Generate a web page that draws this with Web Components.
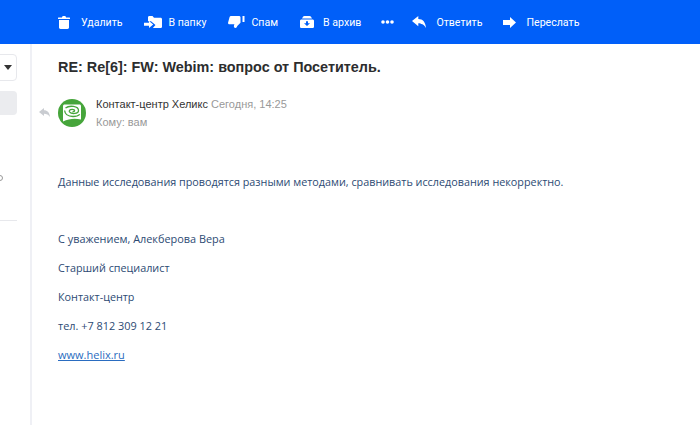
<!DOCTYPE html>
<html lang="ru">
<head>
<meta charset="utf-8">
<title>Письмо</title>
<style>
    html, body { margin: 0; height: 100%; background: #fff; overflow: hidden; }
    body { font-family: "Liberation Sans", Arial, sans-serif; }
    mail-body a { color: #2a6cc0; font-size: 11px; }
</style>
</head>
<body>

<template id="tool-button-tmpl">
    <style>
        :host {
            display: flex;
            align-items: center;
            gap: var(--icon-gap, 8px);
            margin-right: var(--after, 22px);
            color: #fff;
            font: 10.6px Roboto, sans-serif;
            white-space: nowrap;
        }
        ::slotted(svg) { display: block; fill: #fff; }
    </style>
    <slot name="icon"></slot>
    <slot></slot>
</template>

<template id="mail-toolbar-tmpl">
    <style>
        :host {
            display: flex;
            align-items: center;
            height: 44px;
            padding-left: 58px;
            background: #005ff9;
        }
    </style>
    <slot></slot>
</template>

<template id="mail-sidebar-tmpl">
    <style>
        :host {
            display: block;
            flex: none;
            width: 30px;
            height: 381px;
            border-right: 2px solid #eff0f5;
            overflow: hidden;
        }
        .select {
            box-sizing: border-box;
            width: 30px;
            height: 27px;
            margin: 10px 0 0 -13px;
            border: 1px solid #e7e8ec;
            border-radius: 4px;
            display: flex;
            align-items: center;
            justify-content: flex-end;
            padding-right: 4px;
        }
        .arrow {
            width: 0;
            height: 0;
            border: 4px solid transparent;
            border-top: 5px solid #333;
            border-bottom: 0;
        }
        .active {
            width: 30px;
            height: 24px;
            margin: 10px 0 0 -13px;
            border-radius: 4px;
            background: #ebecef;
        }
        .dot {
            box-sizing: border-box;
            width: 6px;
            height: 6px;
            margin: 60px 0 0 -3px;
            border: 1px solid #999;
            border-radius: 50%;
        }
        hr {
            width: 17px;
            height: 1px;
            margin: 39px 0 0;
            border: 0;
            background: #e7e8ec;
        }
    </style>
    <div class="select"><span class="arrow"></span></div>
    <div class="active"></div>
    <div class="dot"></div>
    <hr>
</template>

<template id="mail-header-tmpl">
    <style>
        :host {
            display: flex;
            align-items: flex-start;
            margin-top: 23px;
            margin-left: -19px;
            font: 11px Arial, "Liberation Sans", sans-serif;
        }
        .back { flex: none; width: 11px; height: 9px; margin: 9px 8px 0 0; fill: #c9ccd1; }
        .avatar { flex: none; width: 28px; height: 28px; margin-right: 10px; }
        .who { line-height: 18px; margin-top: -4px; }
        .name { color: #333; }
        .date, .to { color: #999; }
    </style>
    <svg class="back" viewBox="0 0 11 9"><path d="M0 4 L5 0 V2.3 C8.5 2.3 10.5 4.5 11 9 C9.5 6.6 7.6 5.7 5 5.7 V8 Z"/></svg>
    <svg class="avatar" viewBox="0 0 28 28">
        <circle cx="14" cy="14" r="14" fill="#46a53b"/>
        <path d="M5 7 C5 6 5.7 5.4 6.6 5.4 H21.4 C22.4 5.4 23 6 23 7 V20.5 C17 19 11 19.6 5 22.4 Z" fill="#fff"/>
        <path d="M7.5 9 C11.5 6 20.5 7 20.5 11.5 C20.5 15 13.5 15.5 11.5 12.8 C10.4 11 14 9.6 16.2 10.9 C17.2 11.7 16.2 13 14.4 12.8" fill="none" stroke="#46a53b" stroke-width="1.3"/>
        <path d="M6.6 11.5 C7 15.6 10.6 17.4 15 17.5 C17.6 17.5 20.2 17 21.8 15.4" fill="none" stroke="#46a53b" stroke-width="1.3"/>
    </svg>
    <div class="who">
        <div><span class="name"><slot name="from"></slot></span> <span class="date"><slot name="date"></slot></span></div>
        <div class="to"><slot name="to"></slot></div>
    </div>
</template>

<template id="mail-body-tmpl">
    <style>
        :host {
            display: block;
            margin-top: 43px;
            color: #2c4a73;
            font: 10.8px/15px "Open Sans", sans-serif;
        }
        ::slotted(p) { margin: 0 0 14px; }
        ::slotted(p.lead) { margin-bottom: 42px; }
        ::slotted(p.wide) { font-size: 10.9px; }
    </style>
    <slot></slot>
</template>

<template id="mail-view-tmpl">
    <style>
        :host { display: block; flex: 1; padding-left: 26px; }
        h1 {
            margin: 15px 0 0;
            color: #2c2d2e;
            font: bold 14.4px/17px Arial, "Liberation Sans", sans-serif;
        }
    </style>
    <h1><slot name="subject"></slot></h1>
    <slot></slot>
</template>

<template id="mail-app-tmpl">
    <style>
        :host { display: block; }
        .row { display: flex; }
    </style>
    <slot name="toolbar"></slot>
    <div class="row">
        <mail-sidebar></mail-sidebar>
        <slot></slot>
    </div>
</template>

<mail-app>
    <mail-toolbar slot="toolbar">
        <tool-button style="--icon-gap:11px">
            <svg slot="icon" width="12" height="13" viewBox="0 0 12 14" preserveAspectRatio="none"><path d="M4 1.5 C4 .6 4.6 0 5.5 0 H6.5 C7.4 0 8 .6 8 1.5 H11.5 C11.8 1.5 12 1.7 12 2 V3.2 H0 V2 C0 1.7 .2 1.5 .5 1.5 Z M1 4.3 H11 V12.5 C11 13.4 10.4 14 9.5 14 H2.5 C1.6 14 1 13.4 1 12.5 Z"/></svg>
            Удалить
        </tool-button>
        <tool-button style="--icon-gap:6px">
            <svg slot="icon" width="18" height="12" viewBox="0 0 18 14" preserveAspectRatio="none"><path d="M4 1.5 C4 .7 4.6 0 5.4 0 H8.5 L10 2 H16.5 C17.3 2 18 2.7 18 3.5 V12.5 C18 13.3 17.3 14 16.5 14 H8.8 L11.5 10.5 7 6 H4 Z M0 8 H5 V5.8 L9.2 10 5 14 V11.4 H0 Z"/></svg>
            В папку
        </tool-button>
        <tool-button style="--icon-gap:5px">
            <svg slot="icon" width="18" height="12" viewBox="0 0 18 14" preserveAspectRatio="none"><path d="M3 0 H11 C11.8 0 12.5 .7 12.5 1.5 V8 L9.5 11.5 C9 12.2 8.8 14 7.5 14 C6.2 14 5.6 12.6 6 11 L6.4 9.5 H1.6 C.5 9.5 -.2 8.6 .1 7.6 L1.6 1.2 C1.8 .5 2.3 0 3 0 Z M14.5 0 H16.5 V7 H14.5 Z"/></svg>
            Спам
        </tool-button>
        <tool-button style="--icon-gap:9px;--after:20px">
            <svg slot="icon" width="14" height="12" viewBox="0 0 14 14" preserveAspectRatio="none"><path fill-rule="evenodd" d="M3 1 C3.3 .4 3.8 0 4.5 0 H9.5 C10.2 0 10.7 .4 11 1 L12 3 H2 Z M1.5 4 H12.5 C13.3 4 14 4.7 14 5.5 V12.5 C14 13.3 13.3 14 12.5 14 H1.5 C.7 14 0 13.3 0 12.5 V5.5 C0 4.7 .7 4 1.5 4 Z M6 6 V8.5 H4 L7 11.8 10 8.5 H8 V6 Z"/></svg>
            В архив
        </tool-button>
        <tool-button style="--icon-gap:0;--after:18px">
            <svg slot="icon" width="13" height="4" viewBox="0 0 13 4"><circle cx="2" cy="2" r="1.8"/><circle cx="6.5" cy="2" r="1.8"/><circle cx="11" cy="2" r="1.8"/></svg>
        </tool-button>
        <tool-button style="--icon-gap:10px;--after:21px">
            <svg slot="icon" width="14" height="12" viewBox="0 0 14 12"><path d="M0 5 L6.3 0 V3 C11 3 13.5 6.3 14 12 C12.4 9.4 10.6 7.8 9 8 L8.6 7.6 C7.8 7.3 7 7.2 6.3 7.2 V10.2 Z"/></svg>
            Ответить
        </tool-button>
        <tool-button style="--icon-gap:10px">
            <svg slot="icon" width="13" height="11" viewBox="0 0 13 12" preserveAspectRatio="none"><path d="M13 6 L7 0 V3.4 H0 V8.6 H7 V12 Z"/></svg>
            Переслать
        </tool-button>
    </mail-toolbar>

    <mail-view>
        <span slot="subject">RE: Re[6]: FW: Webim: вопрос от Посетитель.</span>
        <mail-header>
            <span slot="from">Контакт-центр Хеликс</span>
            <span slot="date">Сегодня, 14:25</span>
            <span slot="to">Кому: вам</span>
        </mail-header>
        <mail-body>
            <p class="lead">Данные исследования проводятся разными методами, сравнивать исследования некорректно.</p>
            <p class="wide">С уважением, Алекберова Вера</p>
            <p>Старший специалист</p>
            <p>Контакт-центр</p>
            <p class="wide">тел. +7 812 309 12 21</p>
            <p><a href="#">www.helix.ru</a></p>
        </mail-body>
    </mail-view>
</mail-app>

<script>
    "use strict";

    // テンプレートをShadowツリーへコピーするだけの共通クラス
    function define(name) {
        customElements.define(name, class extends HTMLElement {
            connectedCallback() {
                if (this.shadowRoot) return;
                const tmpl = document.getElementById(name + "-tmpl");
                this.attachShadow({mode: "open"}).append(tmpl.content.cloneNode(true));
            }
        });
    }

    ["tool-button", "mail-toolbar", "mail-sidebar", "mail-header", "mail-body", "mail-view", "mail-app"].forEach(define);
</script>
</body>
</html>
